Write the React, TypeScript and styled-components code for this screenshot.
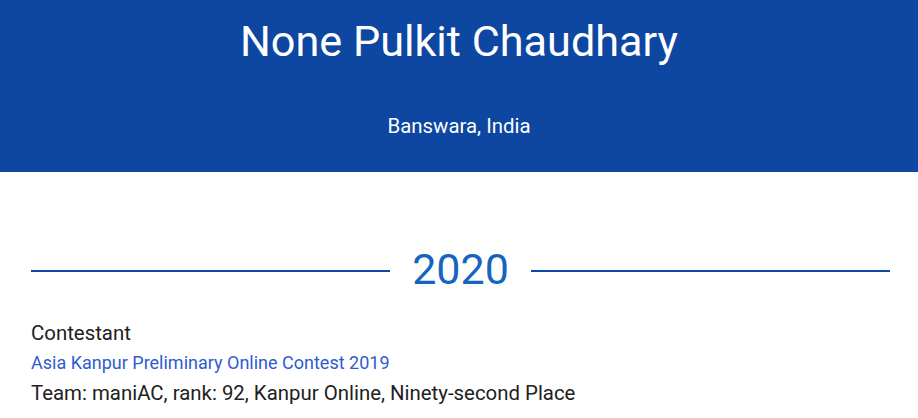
import React from "react";
import styled, { createGlobalStyle } from "styled-components";

const Global = createGlobalStyle`
  html, body { margin: 0; padding: 0; background: #ffffff; }
  body { font-family: Roboto, "Noto Sans", Arial, sans-serif; color: #212121; }
`;

const Header = styled.header`
  background: #0d47a1;
  height: 172px;
  display: flex;
  flex-direction: column;
  align-items: center;
  color: #ffffff;
  box-sizing: border-box;
  padding-top: 14px;
`;

const Name = styled.h1`
  margin: 0;
  font-size: 43.2px;
  font-weight: 400;
  line-height: 56px;
`;

const Location = styled.div`
  margin-top: 43px;
  font-size: 20.4px;
  line-height: 26px;
`;

const Main = styled.main`
  padding: 0 28px 0 31px;
`;

const YearRow = styled.div`
  display: flex;
  align-items: center;
  gap: 22px;
  margin-top: 71px;
`;

const Rule = styled.div`
  flex: 1;
  height: 2px;
  background: #0d47a1;
`;

const Year = styled.h2`
  margin: 0;
  font-size: 43px;
  font-weight: 400;
  color: #1565c0;
  line-height: 56px;
  position: relative;
  top: -2px;
`;

const Entry = styled.div`
  margin-top: 19px;
  display: flex;
  flex-direction: column;
`;

const Role = styled.div`
  font-size: 20.4px;
  line-height: 30px;
`;

const ContestLink = styled.a`
  font-size: 18px;
  line-height: 30px;
  color: #2f5ccf;
  text-decoration: none;
`;

const Detail = styled.div`
  font-size: 20.4px;
  line-height: 30px;
`;

export default function App() {
  return (
    <>
      <Global />
      <Header>
        <Name>None Pulkit Chaudhary</Name>
        <Location>Banswara, India</Location>
      </Header>
      <Main>
        <YearRow>
          <Rule />
          <Year>2020</Year>
          <Rule />
        </YearRow>
        <Entry>
          <Role>Contestant</Role>
          <ContestLink href="#">Asia Kanpur Preliminary Online Contest 2019</ContestLink>
          <Detail>Team: maniAC, rank: 92, Kanpur Online, Ninety-second Place</Detail>
        </Entry>
      </Main>
    </>
  );
}
